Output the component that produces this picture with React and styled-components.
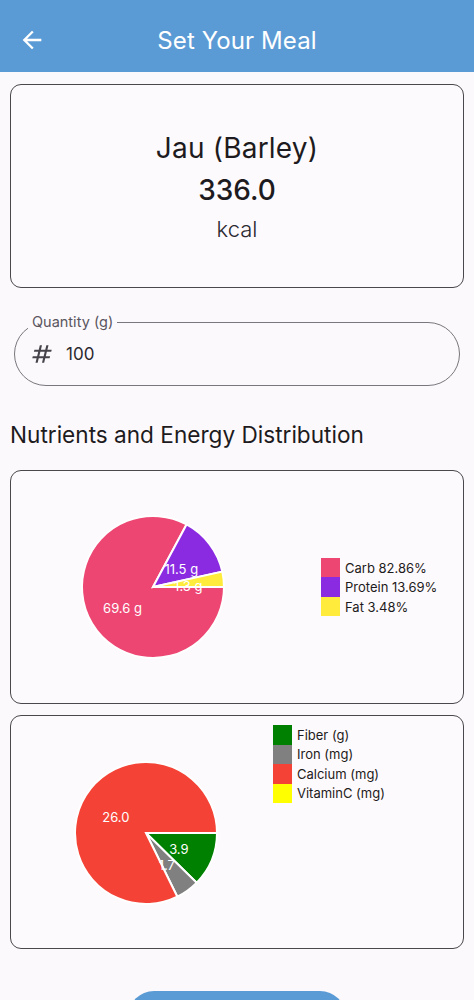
import React from "react";
import styled, { createGlobalStyle } from "styled-components";

const Global = createGlobalStyle`
  html, body { margin: 0; padding: 0; background: #fcf9fc; }
  body { font-family: Inter, "Noto Sans", sans-serif; color: #1d1b20; }
  * { box-sizing: border-box; }
`;

const Header = styled.header`
  height: 72px;
  background: #5b9bd5;
  display: flex;
  align-items: center;
  padding: 8px 0 0 18px;
`;

const BackIcon = styled.svg`
  width: 28px;
  height: 28px;
  fill: #fff;
`;

const Title = styled.h1`
  flex: 1;
  margin: 0;
  padding-right: 46px;
  text-align: center;
  color: #fff;
  font-size: 24px;
  font-weight: 400;
  letter-spacing: 0.1px;
`;

const Content = styled.main`
  padding: 0 10px;
  display: flex;
  flex-direction: column;
`;

const Card = styled.section`
  border: 1px solid #4a474d;
  border-radius: 11px;
  background: #fdfafd;
  height: ${(p) => p.$h}px;
  margin-top: ${(p) => p.$mt}px;
`;

const FoodCard = styled(Card)`
  display: flex;
  flex-direction: column;
  align-items: center;
  justify-content: center;
  padding-top: 2px;
`;

const FoodName = styled.div`
  font-size: 28px;
  line-height: 34px;
  color: #1d1b20;
  letter-spacing: 0.2px;
`;

const Calories = styled.div`
  font-size: 28px;
  font-weight: 500;
  line-height: 38px;
  margin-top: 6px;
`;

const Unit = styled.div`
  font-size: 22px;
  font-weight: 300;
  line-height: 30px;
  color: #2b2930;
  margin-top: 5px;
`;

const QtyField = styled.fieldset`
  margin: 26px 4px 0;
  padding: 0 16px 0 13px;
  border: 1px solid #7a767d;
  border-radius: 32px;
  min-width: 0;
`;

const QtyLabel = styled.legend`
  font-size: 14.5px;
  line-height: 16px;
  color: #5a5660;
  padding: 0 4px;
`;

const QtyRow = styled.div`
  height: 48px;
  margin-bottom: 7px;
  display: flex;
  align-items: center;
  gap: 11px;
`;

const HashIcon = styled.svg`
  width: 26px;
  height: 26px;
  fill: #46434a;
  margin-left: 1px;
`;

const QtyValue = styled.span`
  font-size: 17px;
  color: #2b2930;
`;

const SectionTitle = styled.h2`
  margin: 35px 0 0;
  font-size: 22.6px;
  line-height: 28px;
  font-weight: 400;
  color: #1d1b20;
`;

const ChartCard = styled(Card)`
  display: flex;
  align-items: ${(p) => p.$align};
`;

const PieSvg = styled.svg`
  display: block;
  flex: none;
`;

const Legend = styled.ul`
  list-style: none;
  margin: ${(p) => p.$mt}px 0 0 ${(p) => p.$ml}px;
  padding: 0;
`;

const LegendItem = styled.li`
  display: flex;
  align-items: center;
  height: 19.5px;
  font-size: 13px;
  color: #1d1b20;
`;

const Swatch = styled.span`
  width: 19px;
  height: 19.5px;
  background: ${(p) => p.$c};
  margin-right: 5px;
  flex: none;
`;

const PieLabel = styled.text`
  fill: #fff;
  font-size: 13px;
  font-family: Inter, "Noto Sans", sans-serif;
`;

const SaveButton = styled.button`
  align-self: center;
  margin: 42px 0 30px;
  width: 218px;
  height: 52px;
  border: none;
  border-radius: 26px;
  background: #5b9bd5;
  color: #fff;
  font-family: inherit;
  font-size: 17px;
`;

function Pie({ width, height, cx, cy, r, data }) {
  const total = data.reduce((s, d) => s + d.value, 0);
  let a = 0;
  const slices = data
    .filter((d) => d.value > 0)
    .map((d) => {
      const sweep = (d.value / total) * 2 * Math.PI;
      const a0 = a;
      const a1 = a + sweep;
      a = a1;
      const x0 = cx + r * Math.cos(a0);
      const y0 = cy + r * Math.sin(a0);
      const x1 = cx + r * Math.cos(a1);
      const y1 = cy + r * Math.sin(a1);
      const large = sweep > Math.PI ? 1 : 0;
      const mid = (a0 + a1) / 2;
      return {
        ...d,
        path: `M${cx} ${cy} L${x0} ${y0} A${r} ${r} 0 ${large} 1 ${x1} ${y1} Z`,
        lx: cx + r * 0.5 * Math.cos(mid),
        ly: cy + r * 0.5 * Math.sin(mid) + 3,
      };
    });
  return (
    <PieSvg width={width} height={height} viewBox={`0 0 ${width} ${height}`}>
      {slices.map((s) => (
        <path key={s.key} d={s.path} fill={s.color} stroke="#fff" strokeWidth="2" strokeLinejoin="miter" />
      ))}
      {slices.map((s) => (
        <PieLabel key={s.key + "l"} x={s.lx} y={s.ly} textAnchor="middle" dominantBaseline="central">
          {s.label}
        </PieLabel>
      ))}
    </PieSvg>
  );
}

const macro = [
  { key: "carb", value: 69.6, label: "69.6 g", color: "#ed4672", legend: "Carb 82.86%" },
  { key: "protein", value: 11.5, label: "11.5 g", color: "#8a2be2", legend: "Protein 13.69%" },
  { key: "fat", value: 2.92, label: "1.3 g", color: "#ffeb3b", legend: "Fat 3.48%" },
];

const micro = [
  { key: "fiber", value: 3.9, label: "3.9", color: "#008000", legend: "Fiber (g)" },
  { key: "iron", value: 1.7, label: "1.7", color: "#808080", legend: "Iron (mg)" },
  { key: "calcium", value: 26.0, label: "26.0", color: "#f44336", legend: "Calcium (mg)" },
  { key: "vitc", value: 0, label: "0.0", color: "#ffff00", legend: "VitaminC (mg)" },
];

export default function App() {
  return (
    <>
      <Global />
      <Header>
        <BackIcon viewBox="0 0 24 24">
          <path d="M20 11H7.83l5.59-5.59L12 4l-8 8 8 8 1.41-1.41L7.83 13H20v-2z" />
        </BackIcon>
        <Title>Set Your Meal</Title>
      </Header>
      <Content>
        <FoodCard $h={204} $mt={12}>
          <FoodName>Jau (Barley)</FoodName>
          <Calories>336.0</Calories>
          <Unit>kcal</Unit>
        </FoodCard>

        <QtyField>
          <QtyLabel>Quantity (g)</QtyLabel>
          <QtyRow>
            <HashIcon viewBox="0 0 24 24">
              <path d="M20.5 10L21 8h-4l1-4h-2l-1 4h-4l1-4h-2L9 8H5l-.5 2h4l-1 4h-4L3 16h4l-1 4h2l1-4h4l-1 4h2l1-4h4l.5-2h-4l1-4h4zm-7 4h-4l1-4h4l-1 4z" />
            </HashIcon>
            <QtyValue>100</QtyValue>
          </QtyRow>
        </QtyField>

        <SectionTitle>Nutrients and Energy Distribution</SectionTitle>

        <ChartCard $h={234} $mt={21} $align="center">
          <Pie width={300} height={232} cx={142} cy={116} r={71} data={macro} />
          <Legend $ml={10} $mt={0}>
            {macro.map((d) => (
              <LegendItem key={d.key}>
                <Swatch $c={d.color} />
                {d.legend}
              </LegendItem>
            ))}
          </Legend>
        </ChartCard>

        <ChartCard $h={234} $mt={11} $align="flex-start">
          <Pie width={252} height={232} cx={135} cy={117} r={71} data={micro} />
          <Legend $ml={10} $mt={9}>
            {micro.map((d) => (
              <LegendItem key={d.key}>
                <Swatch $c={d.color} />
                {d.legend}
              </LegendItem>
            ))}
          </Legend>
        </ChartCard>

        <SaveButton>Add to Meal</SaveButton>
      </Content>
    </>
  );
}
